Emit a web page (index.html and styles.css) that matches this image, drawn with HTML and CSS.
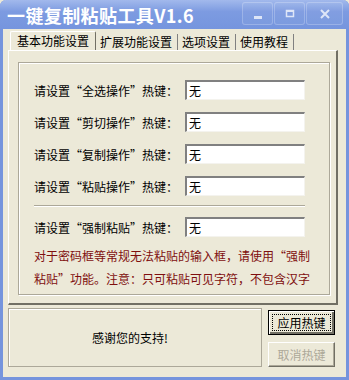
FILE: index.html
```html
<!DOCTYPE html>
<html lang="zh-CN">
<head>
    <meta charset="UTF-8">
    <title>一键复制粘贴工具V1.6</title>
    <link rel="stylesheet" href="styles.css">
</head>
<body>
    <div class="window">
        <div class="titlebar">
            <span class="title">一键复制粘贴工具V1.6</span>
            <div class="caption-buttons">
                <span class="cap-btn"><svg width="12" height="12" viewBox="0 0 12 12"><rect x="2" y="8" width="8" height="3" fill="#fff"/></svg></span>
                <span class="cap-btn"><svg width="12" height="12" viewBox="0 0 12 12"><rect x="2.5" y="2.5" width="7" height="6" fill="none" stroke="#fff" stroke-width="1.5"/><rect x="2" y="2" width="8" height="2" fill="#fff"/></svg></span>
                <span class="cap-btn close"><svg width="12" height="12" viewBox="0 0 12 12"><path d="M2 2 L10 10 M10 2 L2 10" stroke="#fff" stroke-width="2"/></svg></span>
            </div>
        </div>
        <div class="client">
            <div class="tabs">
                <span class="tab active">基本功能设置</span>
                <span class="tab">扩展功能设置</span>
                <span class="tab">选项设置</span>
                <span class="tab">使用教程</span>
            </div>
            <div class="panel">
                <div class="group">
                    <div class="row">
                        <label>请设置“全选操作”热键：</label>
                        <span class="field">无</span>
                    </div>
                    <div class="row">
                        <label>请设置“剪切操作”热键：</label>
                        <span class="field">无</span>
                    </div>
                    <div class="row">
                        <label>请设置“复制操作”热键：</label>
                        <span class="field">无</span>
                    </div>
                    <div class="row">
                        <label>请设置“粘贴操作”热键：</label>
                        <span class="field">无</span>
                    </div>
                    <div class="separator"></div>
                    <div class="row">
                        <label>请设置“强制粘贴”热键：</label>
                        <span class="field">无</span>
                    </div>
                    <p class="note">对于密码框等常规无法粘贴的输入框，请使用“强制粘贴”功能。注意：只可粘贴可见字符，不包含汉字</p>
                </div>
            </div>
            <div class="footer">
                <div class="status">感谢您的支持!</div>
                <div class="actions">
                    <button class="btn default"><span>应用热键</span></button>
                    <button class="btn" disabled>取消热键</button>
                </div>
            </div>
        </div>
    </div>
</body>
</html>
```

FILE: styles.css
```css
body {
    margin: 0;
    font-family: "Noto Sans CJK SC", "DejaVu Sans", sans-serif;
    font-size: 12px;
    background: #ece9d8;
}
.window {
    width: 349px;
    height: 380px;
    box-sizing: border-box;
    background: #ece9d8;
    border: 3px solid #7594dd;
    border-top: none;
    border-radius: 6px 6px 0 0;
    display: flex;
    flex-direction: column;
}
.titlebar {
    height: 29px;
    margin: 0 -3px;
    padding: 0 6px 0 7px;
    box-sizing: border-box;
    background: linear-gradient(#a2b9ec, #7d9be1 40%, #7595de);
    border-radius: 6px 6px 0 0;
    display: flex;
    align-items: center;
    justify-content: space-between;
}
.title {
    color: #fff;
    font-size: 18px;
    font-weight: bold;
    letter-spacing: 0.4px;
}
.caption-buttons {
    display: flex;
    gap: 1px;
    margin-top: -2px;
}
.cap-btn {
    width: 29px;
    height: 21px;
    display: flex;
    align-items: center;
    justify-content: center;
    border: 1px solid rgba(255, 255, 255, 0.3);
    border-radius: 3px;
    background: rgba(255, 255, 255, 0.06);
    opacity: 0.75;
}
.cap-btn.close {
    width: 35px;
}
.client {
    flex: 1;
    display: flex;
    flex-direction: column;
}
.tabs {
    display: flex;
    margin: 4px 0 0 7px;
    height: 17px;
    align-items: flex-end;
}
.tab {
    height: 16px;
    line-height: 16px;
    padding: 0 5px 0 4px;
    border-right: 1px solid #808080;
    color: #000;
}
.tab.active {
    height: 18px;
    line-height: 18px;
    padding: 0 6px;
    border-left: 1px solid #fff;
    border-top: 1px solid #fff;
    border-right: 1px solid #716f64;
    border-radius: 2px 2px 0 0;
}
.panel {
    margin-left: 5px;
    width: 330px;
    height: 255px;
    box-sizing: border-box;
    border-top: 1px solid #fff;
    border-left: 1px solid #fff;
    border-right: 2px solid #716f64;
    border-bottom: 2px solid #716f64;
    padding: 11px 6px 0 9px;
}
.group {
    height: 233px;
    box-sizing: border-box;
    border: 1px solid #aca899;
    box-shadow: inset 1px 1px 0 #fff, 1px 1px 0 #fff;
    padding: 11px 0 0 15px;
}
.row {
    height: 32px;
    display: flex;
    align-items: center;
}
.row label {
    width: 151px;
}
.field {
    width: 120px;
    height: 20px;
    box-sizing: border-box;
    background: #fff;
    border-top: 2px solid #808080;
    border-left: 2px solid #808080;
    border-right: 1px solid #f4f3ee;
    border-bottom: 1px solid #f4f3ee;
    padding-left: 2px;
    line-height: 17px;
}
.separator {
    width: 271px;
    height: 0;
    border-top: 1px solid #aca899;
    border-bottom: 1px solid #fff;
    margin: 3px 0 4px;
}
.note {
    margin: 1px 0 0;
    width: 280px;
    color: #7f0f0f;
    line-height: 23px;
}
.footer {
    display: flex;
    margin: 3px 0 0 5px;
}
.status {
    width: 254px;
    height: 59px;
    box-sizing: border-box;
    border: 1px solid #aca899;
    box-shadow: inset 1px 1px 0 #fff;
    display: flex;
    align-items: center;
    justify-content: center;
    padding-right: 10px;
}
.actions {
    display: flex;
    flex-direction: column;
    gap: 7px;
    margin: 2px 0 0 6px;
}
.btn {
    width: 67px;
    height: 25px;
    padding: 0;
    font-family: inherit;
    font-size: 12px;
    background: #ece9d8;
    color: #000;
    border: 1px solid;
    border-color: #fff #716f64 #716f64 #fff;
    box-shadow: inset -1px -1px 0 #aca899;
}
.btn.default {
    border: 1px solid #000;
    box-shadow: inset 1px 1px 0 #fff, inset -2px -2px 0 #716f64;
}
.btn.default span {
    display: inline-block;
    border: 1px dotted #000;
    padding: 0 4px;
    line-height: 15px;
}
.btn:disabled {
    color: #aca899;
}
```
